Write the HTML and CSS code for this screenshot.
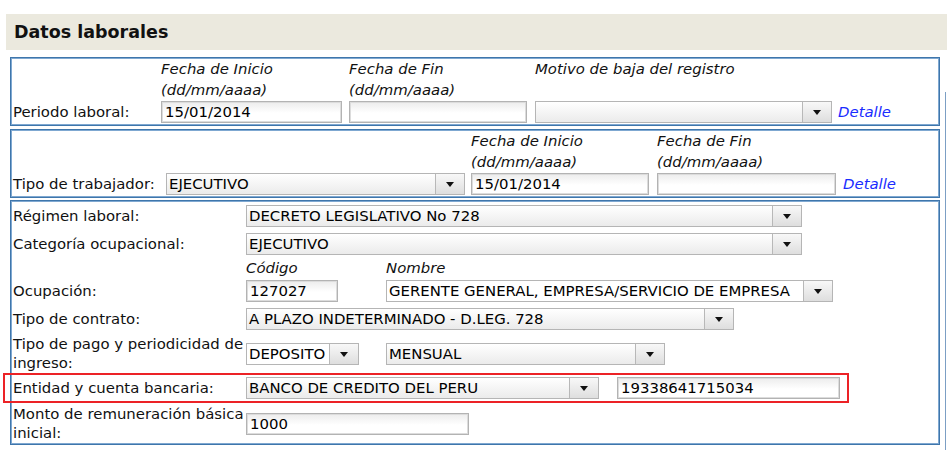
FILE: index.html
```html
<!DOCTYPE html>
<html lang="es">
<head>
<meta charset="utf-8">
<title>Datos laborales</title>
<link rel="stylesheet" href="styles.css">
</head>
<body>
<div class="page">
  <h2 class="title">Datos laborales</h2>
  <div class="body-row">
    <div class="boxes">

      <section class="box box-periodo">
        <div class="cap c2">Fecha de Inicio<br>(dd/mm/aaaa)</div>
        <div class="cap c3">Fecha de Fin<br>(dd/mm/aaaa)</div>
        <div class="cap c4">Motivo de baja del registro</div>
        <div class="lbl r2 c1">Periodo laboral:</div>
        <div class="r2 c2"><div class="inp w181">15/01/2014</div></div>
        <div class="r2 c3"><div class="inp w178"></div></div>
        <div class="r2 c4">
          <div class="sel w297"><span class="sel-text"></span><span class="sel-btn"><i class="caret"></i></span></div>
        </div>
        <div class="r2 c5"><a class="link" href="#">Detalle</a></div>
      </section>

      <section class="box box-tipo">
        <div class="cap c3">Fecha de Inicio<br>(dd/mm/aaaa)</div>
        <div class="cap c4">Fecha de Fin<br>(dd/mm/aaaa)</div>
        <div class="lbl r2 c1">Tipo de trabajador:</div>
        <div class="r2 c2">
          <div class="sel w299"><span class="sel-text">EJECUTIVO</span><span class="sel-btn"><i class="caret"></i></span></div>
        </div>
        <div class="r2 c3"><div class="inp w178">15/01/2014</div></div>
        <div class="r2 c4"><div class="inp w179"></div></div>
        <div class="r2 c5"><a class="link" href="#">Detalle</a></div>
      </section>

      <section class="box box-main">
        <div class="row row-std">
          <div class="lbl">Régimen laboral:</div>
          <div class="ctrls">
            <div class="sel w556"><span class="sel-text">DECRETO LEGISLATIVO No 728</span><span class="sel-btn"><i class="caret"></i></span></div>
          </div>
        </div>
        <div class="row row-std">
          <div class="lbl">Categoría ocupacional:</div>
          <div class="ctrls">
            <div class="sel w556"><span class="sel-text">EJECUTIVO</span><span class="sel-btn"><i class="caret"></i></span></div>
          </div>
        </div>
        <div class="row row-cap">
          <div class="lbl"></div>
          <div class="ctrls">
            <span class="cap-inline w140">Código</span>
            <span class="cap-inline">Nombre</span>
          </div>
        </div>
        <div class="row row-ocup">
          <div class="lbl">Ocupación:</div>
          <div class="ctrls">
            <div class="inp w92 mr48">127027</div>
            <div class="sel w447 plain"><span class="sel-text">GERENTE GENERAL, EMPRESA/SERVICIO DE EMPRESA</span><span class="sel-btn"><i class="caret"></i></span></div>
          </div>
        </div>
        <div class="row row-std">
          <div class="lbl">Tipo de contrato:</div>
          <div class="ctrls">
            <div class="sel w488"><span class="sel-text">A PLAZO INDETERMINADO - D.LEG. 728</span><span class="sel-btn"><i class="caret"></i></span></div>
          </div>
        </div>
        <div class="row row-two">
          <div class="lbl lbl-two">Tipo de pago y periodicidad de ingreso:</div>
          <div class="ctrls">
            <div class="sel w113 mr27 plain"><span class="sel-text">DEPOSITO</span><span class="sel-btn"><i class="caret"></i></span></div>
            <div class="sel w279"><span class="sel-text">MENSUAL</span><span class="sel-btn"><i class="caret"></i></span></div>
          </div>
        </div>
        <div class="row row-bank">
          <div class="highlight"></div>
          <div class="lbl">Entidad y cuenta bancaria:</div>
          <div class="ctrls">
            <div class="sel w353 mr18"><span class="sel-text">BANCO DE CREDITO DEL PERU</span><span class="sel-btn"><i class="caret"></i></span></div>
            <div class="inp w223">19338641715034</div>
          </div>
        </div>
        <div class="row row-two">
          <div class="lbl lbl-two">Monto de remuneración básica inicial:</div>
          <div class="ctrls">
            <div class="inp w223">1000</div>
          </div>
        </div>
      </section>

    </div>
    <div class="edge"></div>
  </div>
</div>
</body>
</html>
```
FILE: styles.css
```css
html, body {
  margin: 0;
  padding: 0;
  background: #fff;
  overflow: hidden;
}

body {
  font-family: "DejaVu Sans", Verdana, sans-serif;
  font-size: 14.9px;
  color: #111;
}

.page {
  padding: 14px 0 0 6px;
  width: 960px;
  height: 436px;
  overflow: hidden;
}

.title {
  margin: 0;
  height: 36px;
  line-height: 36px;
  padding-left: 8px;
  background: #ebe9de;
  font-size: 17.5px;
  font-weight: 700;
  color: #111;
}

.body-row {
  display: flex;
  margin-top: 7px;
  padding-left: 4px;
}

.boxes {
  width: 930px;
  display: flex;
  flex-direction: column;
}

.edge {
  width: 1px;
  margin-left: 5px;
  margin-top: 35px;
  height: 358px;
  background: #7c9fc4;
}

.box {
  box-sizing: border-box;
  border: 1px solid #3f76ab;
  box-shadow: inset 0 0 0 1px #7fa8d1;
  padding: 1px;
}

.box-periodo,
.box-tipo {
  display: grid;
  grid-template-rows: 42px 22px;
  padding-bottom: 2px;
  align-items: center;
}

.box-periodo {
  grid-template-columns: 149px 188px 186px 303px auto;
}

.box-tipo {
  margin-top: 3px;
  grid-template-columns: 154px 305px 186px 186px auto;
}

.box-main {
  margin-top: 2px;
  padding-bottom: 1px;
}

.cap {
  grid-row: 1;
  align-self: start;
  font-style: italic;
  line-height: 21px;
  white-space: nowrap;
}

.c1 { grid-column: 1; }
.c2 { grid-column: 2; }
.c3 { grid-column: 3; }
.c4 { grid-column: 4; }
.c5 { grid-column: 5; }
.r2 { grid-row: 2; }

.lbl {
  padding-left: 1px;
  white-space: nowrap;
}

.link {
  color: #1a2cff;
  font-style: italic;
  text-decoration: none;
  white-space: nowrap;
}

/* rows of main box */
.row {
  display: grid;
  grid-template-columns: 234px 1fr;
  align-items: center;
  box-sizing: border-box;
}

.row-std { padding: 3px 0; }
.row-cap { height: 21px; line-height: 21px; }
.row-ocup { padding: 1px 0 3px; }
.row-two { padding: 2px 0 0; }
.row-bank {
  position: relative;
  padding: 4px 0;
}

.lbl-two {
  white-space: normal;
  line-height: 19px;
}

.ctrls {
  display: flex;
  align-items: center;
}

.cap-inline {
  font-style: italic;
  white-space: nowrap;
}

.highlight {
  position: absolute;
  top: 0;
  bottom: 0;
  left: -9px;
  width: 846px;
  box-sizing: border-box;
  border: 2px solid #ec2226;
  pointer-events: none;
}

/* controls */
.inp,
.sel {
  box-sizing: border-box;
  height: 22px;
  line-height: 20px;
  color: #000;
  white-space: nowrap;
  overflow: hidden;
}

.inp {
  border: 1px solid #b3b3b3;
  box-shadow: inset 0 0 0 1px #dcdcdc;
  background: linear-gradient(#ececec, #ffffff 55%);
  padding: 0 3px;
}

.sel {
  display: flex;
  border: 1px solid #b5b5b5;
  background: linear-gradient(#ffffff, #ebebeb);
}

.sel.plain .sel-text {
  background: #fff;
}

.sel-text {
  flex: 1;
  min-width: 0;
  padding: 0 2px;
  overflow: hidden;
}

.sel-btn {
  flex: none;
  width: 28px;
  border-left: 1px solid #b8b8b8;
  background: linear-gradient(#f8f8f8, #dedede);
  display: flex;
  align-items: center;
  justify-content: center;
}

.caret {
  display: block;
  width: 0;
  height: 0;
  border-left: 4.5px solid transparent;
  border-right: 4.5px solid transparent;
  border-top: 5px solid #111;
  margin-top: 1px;
}

/* widths */
.w92 { width: 92px; }
.w113 { width: 113px; }
.w140 { width: 140px; }
.w178 { width: 178px; }
.w179 { width: 179px; }
.w181 { width: 181px; }
.w223 { width: 223px; }
.w279 { width: 279px; }
.w297 { width: 297px; }
.w299 { width: 299px; }
.w353 { width: 353px; }
.w447 { width: 447px; }
.w488 { width: 488px; }
.w556 { width: 556px; }

.mr18 { margin-right: 18px; }
.mr27 { margin-right: 27px; }
.mr48 { margin-right: 48px; }
```
